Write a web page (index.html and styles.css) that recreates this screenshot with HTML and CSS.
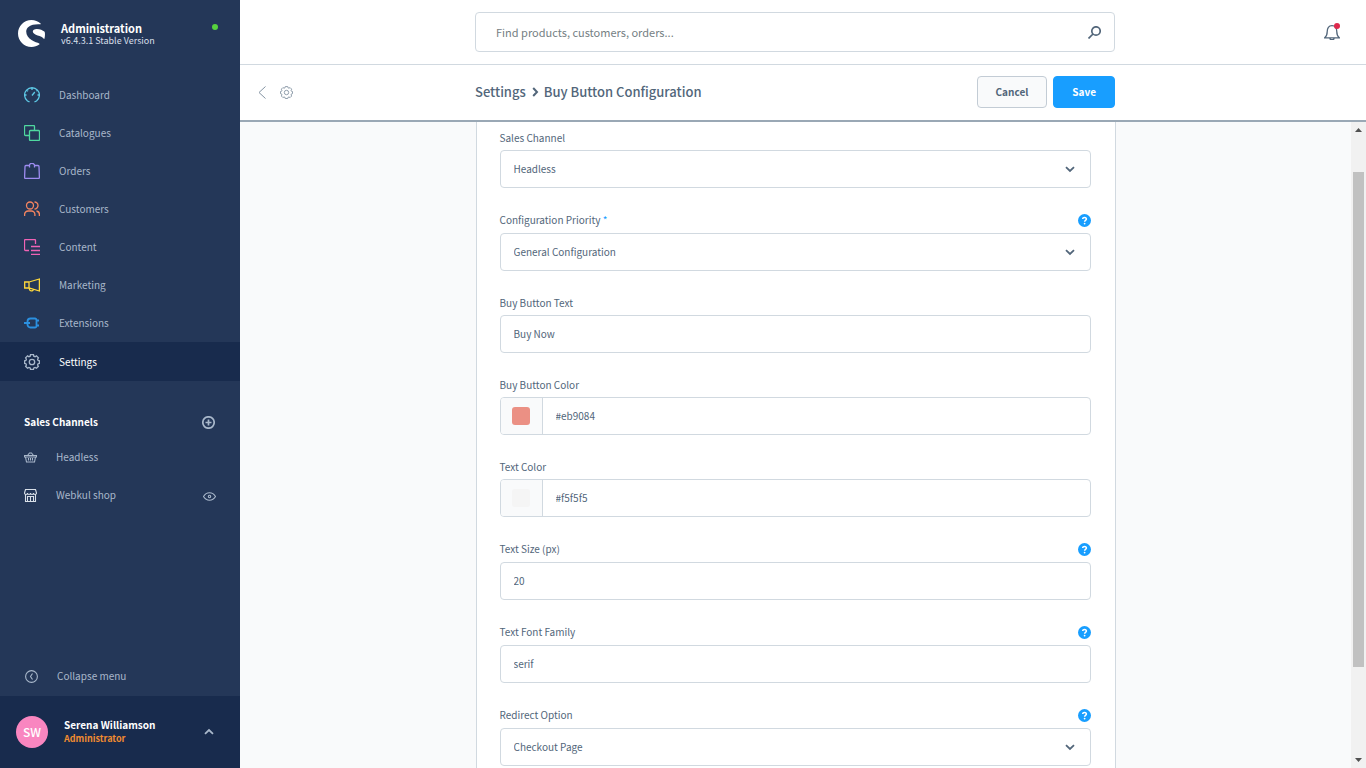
FILE: index.html
```html
<!DOCTYPE html>
<html lang="en">
<head>
<meta charset="utf-8">
<title>Buy Button Configuration | Administration</title>
<link rel="stylesheet" href="styles.css">
</head>
<body class="app">
<svg class="sprite" aria-hidden="true">
  <symbol id="gear" viewBox="0 0 16 16"><path d="M6.500.7h3l.3 1.500 1.300.5 1.300-.8 2 2-.8 1.300.5 1.300 1.300.3v2.600l-1.300.3-.5 1.300.8 1.300-2 2-1.300-.8-1.300.5-.3 1.400h-3l-.3-1.400-1.300-.5-1.300.8-2-2 .8-1.300-.5-1.300-1.300-.3V6.800l1.300-.3.5-1.300-.8-1.300 2-2 1.300.8 1.300-.5z"/><circle cx="8" cy="8" r="2.700"/></symbol>
  <symbol id="chevron" viewBox="0 0 12 12"><path d="M2 4.200 6 8l4-3.800"/></symbol>
  <symbol id="help" viewBox="0 0 13 13"><circle cx="6.500" cy="6.500" r="6.500" fill="#189eff" stroke="none"/><path d="M4.700 5.100c0-2.300 3.700-2.200 3.700 0 0 1.300-1.800 1.300-1.800 2.600" stroke="#fff" stroke-width="1.500"/><circle cx="6.600" cy="9.600" r=".9" fill="#fff" stroke="none"/></symbol>
</svg>

<aside class="sidebar">
  <header class="brand">
    <svg class="brand-logo" viewBox="0 0 27 27" aria-hidden="true"><path d="M22.600 3.500C20 1.300 17 0 13.500 0 6 0 0 6 0 13.500S6 27 13.500 27c2.900 0 5.600-.9 7.800-2.500.4-.3.300-.8-.1-1-3-1.300-13-3.800-13-11.900 0-4.500 4.500-8 14-7.400.7 0 .800-.4.400-.7z"/><path d="M26.300 11.500c-1.500-1.300-4.200-2.600-7.500-2.600-2.500 0-4 1-4 2.500 0 4 9.300 4 11 7.300.2.400.6.300.7-.2.500-2 .7-4.500.2-6.400z"/></svg>
    <div class="brand-text"><strong>Administration</strong><span>v6.4.3.1 Stable Version</span></div>
    <i class="status-dot"></i>
  </header>

  <nav class="menu" aria-label="Main">
    <a class="menu-item" href="#"><svg class="icon cyan" viewBox="0 0 16 16"><path d="M5.500 14.800 3.500 14a7.400 7.400 0 1 1 9 0l-2 .8M8 1v2M1 8h1.500M13.500 8H15M3 3.200l1 1M8 8.500 10.800 5M13 3.200l-.8.800"/></svg>Dashboard</a>
    <a class="menu-item" href="#"><svg class="icon green" viewBox="0 0 16 16"><path d="M5 10.500H1.500a1 1 0 0 1-1-1v-8a1 1 0 0 1 1-1h8a1 1 0 0 1 1 1V5"/><rect x="5.500" y="5.500" width="10" height="10" rx="1"/></svg>Catalogues</a>
    <a class="menu-item" href="#"><svg class="icon violet" viewBox="0 0 16 16"><path d="M5 2.500H2a1 1 0 0 0-1 1l-.4 11a1 1 0 0 0 1 1h12.800a1 1 0 0 0 1-1L15 3.500a1 1 0 0 0-1-1h-3M5.500 4.500V2.300a2.500 2 0 0 1 5 0v2.200"/></svg>Orders</a>
    <a class="menu-item" href="#"><svg class="icon orange" viewBox="0 0 16 16"><circle cx="6" cy="4.500" r="3.500"/><path d="M.6 15v-1.500a3.500 3.500 0 0 1 3.500-3.500h3.300a3.500 3.500 0 0 1 3.500 3.500V15M10.500 1a3.500 3.500 0 0 1 0 7M12.500 10a3.500 3.500 0 0 1 2.900 3.500V15"/></svg>Customers</a>
    <a class="menu-item" href="#"><svg class="icon pink" viewBox="0 0 16 16"><path d="M5 11.500H1.500a1 1 0 0 1-1-1v-9a1 1 0 0 1 1-1h9a1 1 0 0 1 1 1V5M7 7.500h9M7 11.500h9M7 15.400h9"/></svg>Content</a>
    <a class="menu-item" href="#"><svg class="icon yellow" viewBox="0 0 16 16"><path d="M5 5 15.400 2v12L5 11H.7V5zM5 5v6M5.500 11.300a2 2 0 0 0 4 1"/></svg>Marketing</a>
    <a class="menu-item" href="#"><svg class="icon blue" viewBox="0 0 16 16"><path d="M0 8h6M6.500 3.500H11a1.500 1.500 0 0 1 1.500 1.500v6a1.500 1.500 0 0 1-1.500 1.500H6.500a3 3 0 0 1-3-3v-3a3 3 0 0 1 3-3zM12.500 5.500H15M12.500 10.500H15"/></svg>Extensions</a>
    <a class="menu-item active" href="#" aria-current="page"><svg class="icon"><use href="#gear"/></svg>Settings</a>
  </nav>

  <section class="channels">
    <div class="channels-head"><h2>Sales Channels</h2><button class="plain" aria-label="Add sales channel"><svg class="icon-13 thick" viewBox="0 0 13 13"><circle cx="6.500" cy="6.500" r="5.700"/><path d="M6.500 3.500v6M3.500 6.500h6"/></svg></button></div>
    <div class="channel"><a href="#"><svg class="icon-13" viewBox="0 0 13 13"><path d="M.5 4.500h12v1.500H.5zM1.500 6l1 5h8l1-5M3.500 4.500l2-2.500h2l2 2.500M4.500 7v2.500M6.500 7v2.500M8.500 7v2.500"/></svg>Headless</a></div>
    <div class="channel"><a href="#"><svg class="icon-13 light" viewBox="0 0 13 13"><path d="M1.500.5h10l1 3.500c0 2-3 2-3 0 0 2-3 2-3 0 0 2-3 2-3 0 0 2-3 2-3 0zM1.500 5.500v7h10v-7M3.500 12.500v-5h6v5M6.500 7.500v5"/></svg>Webkul shop</a><button class="plain" aria-label="Open storefront"><svg class="icon-13" viewBox="0 0 13 13"><path d="M.5 7.500C3.500 2.500 9.500 2.500 12.500 7.500 9.500 12.500 3.500 12.500.5 7.500z"/><circle cx="6.500" cy="7.500" r="1.200"/></svg></button></div>
  </section>

  <button class="collapse"><svg class="icon-13" viewBox="0 0 13 13"><circle cx="6.500" cy="6.500" r="5.900"/><path d="M7.500 3.500 5.500 6.500l2 3"/></svg>Collapse menu</button>
  <button class="user">
    <span class="avatar">SW</span>
    <span class="user-text"><strong>Serena Williamson</strong><span>Administrator</span></span>
    <svg class="chevron up"><use href="#chevron"/></svg>
  </button>
</aside>

<div class="page">
  <header class="searchbar">
    <label class="search"><input type="search" placeholder="Find products, customers, orders..." aria-label="Search"><svg class="icon-13 thick" viewBox="0 0 13 13"><circle cx="8" cy="5" r="4.200"/><path d="M5 8 .5 12.500"/></svg></label>
    <button class="plain bell" aria-label="Notifications"><svg class="icon" viewBox="0 0 16 16"><path d="M.7 13.800c2-1.500 2.500-3 2.500-6C3.200 4 4.700 1.600 8 1.600s4.800 2.400 4.800 6.200c0 3 .500 4.500 2.500 6zM6 14.500a2 1.200 0 0 0 4 0"/></svg><i class="badge"></i></button>
  </header>

  <div class="titlebar">
    <div class="titlebar-nav">
      <a href="#" aria-label="Back"><svg class="back" viewBox="0 0 8 13"><path d="M7.500.5 1 6.500l6.500 6"/></svg></a>
      <a href="#" aria-label="Settings"><svg class="icon-13"><use href="#gear"/></svg></a>
    </div>
    <div class="titlebar-main">
      <h1 class="crumbs">Settings<svg class="chevron right"><use href="#chevron"/></svg>Buy Button Configuration</h1>
      <div class="actions"><button class="btn">Cancel</button><button class="btn primary">Save</button></div>
    </div>
  </div>

  <div class="body">
    <main class="content">
      <form class="card">
        <div class="field">
          <div class="field-label"><label for="channel">Sales Channel</label></div>
          <div class="control"><select id="channel"><option>Headless</option></select><svg class="chevron"><use href="#chevron"/></svg></div>
        </div>
        <div class="field">
          <div class="field-label"><label for="priority">Configuration Priority <span class="required">*</span></label><button type="button" class="help" aria-label="Help"><svg><use href="#help"/></svg></button></div>
          <div class="control"><select id="priority"><option>General Configuration</option></select><svg class="chevron"><use href="#chevron"/></svg></div>
        </div>
        <div class="field">
          <div class="field-label"><label for="text">Buy Button Text</label></div>
          <div class="control"><input id="text" type="text" value="Buy Now"></div>
        </div>
        <div class="field">
          <div class="field-label"><label for="color">Buy Button Color</label></div>
          <div class="control"><button type="button" class="swatch" aria-label="Pick button color"><i class="coral"></i></button><input id="color" type="text" value="#eb9084"></div>
        </div>
        <div class="field">
          <div class="field-label"><label for="textcolor">Text Color</label></div>
          <div class="control"><button type="button" class="swatch" aria-label="Pick text color"><i class="smoke"></i></button><input id="textcolor" type="text" value="#f5f5f5"></div>
        </div>
        <div class="field">
          <div class="field-label"><label for="size">Text Size (px)</label><button type="button" class="help" aria-label="Help"><svg><use href="#help"/></svg></button></div>
          <div class="control"><input id="size" type="text" value="20"></div>
        </div>
        <div class="field">
          <div class="field-label"><label for="family">Text Font Family</label><button type="button" class="help" aria-label="Help"><svg><use href="#help"/></svg></button></div>
          <div class="control"><input id="family" type="text" value="serif"></div>
        </div>
        <div class="field">
          <div class="field-label"><label for="redirect">Redirect Option</label><button type="button" class="help" aria-label="Help"><svg><use href="#help"/></svg></button></div>
          <div class="control"><select id="redirect"><option>Checkout Page</option></select><svg class="chevron"><use href="#chevron"/></svg></div>
        </div>
      </form>
    </main>
    <div class="scrollbar" aria-hidden="true">
      <svg viewBox="0 0 7 4"><path d="M0 4 3.500 0 7 4z"/></svg>
      <div class="track"><i class="thumb"></i></div>
      <svg viewBox="0 0 7 4"><path d="M0 0 3.500 4 7 0z"/></svg>
    </div>
  </div>
</div>
</body>
</html>
```

FILE: styles.css
```css
* { box-sizing: border-box; }

body, h1, h2 { margin: 0; }

.app {
  display: grid;
  grid-template-columns: 240px minmax(0, 1fr);
  height: 100vh;
  overflow: hidden;
  background: #f9fafb;
  color: #52667a;
  font: 10px/18px "Noto Sans CJK SC", "Noto Sans", sans-serif;
}

button, input, select { font: inherit; color: inherit; }
button { padding: 0; border: 0; background: none; text-align: left; }
a { color: inherit; text-decoration: none; }
svg { display: block; flex: none; fill: none; stroke: currentColor; }
.sprite { position: absolute; width: 0; height: 0; }
.icon { width: 16px; height: 16px; stroke-width: 1.3; }
.icon-13 { width: 13px; height: 13px; stroke-width: 1.1; }
.icon-13.thick { stroke-width: 1.7; }
.chevron { width: 12px; height: 12px; stroke-width: 1.8; }
.chevron.up { transform: rotate(180deg); }
.chevron.right { transform: rotate(-90deg); stroke-width: 2; }

/* Sidebar */
.sidebar {
  display: flex;
  flex-direction: column;
  min-height: 0;
  background: #243758;
  color: #a9b8cb;
}

.brand { display: flex; align-items: center; gap: 16px; height: 67px; margin-bottom: 9px; padding: 0 22px 0 18px; }
.brand-logo { width: 27px; height: 27px; fill: #fff; stroke: none; }
.brand-text { flex: 1; display: flex; flex-direction: column; color: #fff; line-height: 14px; }
.brand-text strong { font-size: 11px; }
.brand-text span { font-size: 9px; line-height: 12px; color: #d8dfe8; }
.status-dot { width: 6px; height: 6px; margin-bottom: 13px; border-radius: 50%; background: #57d23e; }

.menu { display: flex; flex-direction: column; }
.menu-item { display: flex; align-items: center; gap: 19px; height: 38px; padding: 0 24px; }
.menu-item.active { height: 39px; background: #182b4d; color: #fff; }
.menu-item.active .icon { color: #a9b8cb; }
.cyan { color: #5ec9e6; }
.green { color: #4fd8a0; }
.violet { color: #9d8cf0; }
.orange { color: #f58560; }
.pink { color: #f063b5; }
.yellow { color: #ffd93b; }
.icon.blue { color: #2b90e0; stroke-width: 1.8; }

.channels { flex: 1; padding: 31px 24px 0; }
.channels-head, .channel { display: flex; align-items: center; justify-content: space-between; }
.channels-head { height: 20px; margin-bottom: 6px; padding-right: 1px; }
.channels-head h2 { font-size: 10px; color: #fff; }
.channel { height: 38px; }
.channel a { display: flex; align-items: center; gap: 19px; }
.light { color: #d8dfe8; }

.collapse { display: flex; align-items: center; gap: 19px; height: 40px; padding: 0 25px; }
.user { display: flex; align-items: center; gap: 16px; height: 72px; padding: 0 25px 0 16px; background: #182b4d; }
.avatar { width: 32px; height: 32px; border-radius: 50%; background: #f986c0; color: #fff; font-size: 12px; font-weight: 500; line-height: 31px; text-align: center; }
.user-text { flex: 1; display: flex; flex-direction: column; line-height: 14px; }
.user-text strong { color: #fff; }
.user-text span { font-size: 9px; font-weight: 700; color: #f08b30; }

/* Page */
.page { display: flex; flex-direction: column; min-width: 0; min-height: 0; }
.searchbar, .titlebar {
  display: grid;
  grid-template-columns: 1fr minmax(0, 640px) 1fr;
  align-items: center;
  padding-right: 16px;
  background: #fff;
}
.searchbar { height: 65px; border-bottom: 1px solid #d1d9e0; }
.search { grid-column: 2; display: flex; align-items: center; height: 40px; padding: 0 13px 0 20px; border: 1px solid #d1d9e0; border-radius: 4px; }
.search input { flex: 1; min-width: 0; padding: 0; border: 0; outline: 0; background: none; font-size: 11px; }
.search input::placeholder { color: #758083; }
.bell { position: relative; justify-self: end; margin-right: 10px; }
.badge { position: absolute; top: -1px; right: 0; width: 6px; height: 6px; border-radius: 50%; background: #de294c; }

.titlebar { height: 57px; border-bottom: 2px solid #9aa8b5; }
.titlebar-nav { display: flex; align-items: center; gap: 14px; padding-left: 18px; color: #8494a3; }
.back { width: 8px; height: 13px; }
.titlebar-main { display: flex; align-items: center; justify-content: space-between; padding-bottom: 2px; }
.crumbs { display: flex; align-items: center; gap: 3px; font-size: 13px; font-weight: 500; }
.actions { display: flex; gap: 6px; }
.btn { height: 32px; padding: 0 18px; border: 1px solid #c3ccd5; border-radius: 4px; background: #f9fafb; font-weight: 600; }
.btn.primary { border-color: #189eff; background: #189eff; color: #fff; }

.body { flex: 1; display: flex; min-height: 0; }
.content { flex: 1; min-width: 0; overflow: hidden; }
.card {
  display: flex;
  flex-direction: column;
  gap: 23px;
  max-width: 640px;
  margin: 0 auto;
  padding: 7px 24px 40px 23px;
  border: 1px solid #d1d9e0;
  border-width: 0 1px;
  background: #fff;
}
.field { display: flex; flex-direction: column; gap: 3px; }
.field-label { display: flex; align-items: flex-start; justify-content: space-between; }
.required { color: #189eff; }
.help { padding: 3px 0; color: #189eff; }
.help svg { width: 13px; height: 13px; }
.control { position: relative; display: flex; height: 38px; overflow: hidden; border: 1px solid #d1d9e0; border-radius: 4px; background: #fff; }
.control input, .control select { flex: 1; min-width: 0; padding: 0 13px; border: 0; outline: 0; background: none; appearance: none; }
.control .chevron { position: absolute; top: 12px; right: 14px; pointer-events: none; }
.swatch { display: grid; place-items: center; width: 42px; border-right: 1px solid #d1d9e0; background: #f9fafb; }
.swatch i { width: 18px; height: 18px; border-radius: 3px; }
.coral { background: #eb9084; }
.smoke { background: #f5f5f5; }

.scrollbar { display: flex; flex-direction: column; align-items: center; width: 15px; padding: 6px 0; background: #f1f1f1; }
.scrollbar svg { width: 7px; height: 4px; fill: #505050; stroke: none; }
.track { flex: 1; display: flex; justify-content: center; width: 100%; padding: 40px 0 91px; }
.thumb { width: 11px; background: #c1c1c1; }
```
